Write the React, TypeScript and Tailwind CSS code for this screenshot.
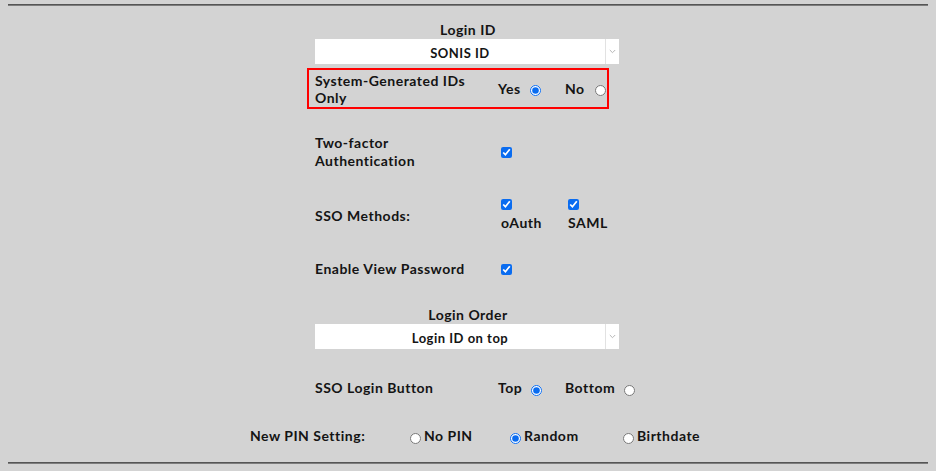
import React from "react";

function FakeSelect({ value }: { value: string }) {
  return (
    <div className="flex h-[25px] w-[304px] bg-white">
      <div className="flex flex-1 items-center justify-center pt-[3px] text-[13px] leading-[22px]">{value}</div>
      <div className="flex w-[14px] items-center justify-center border-l border-[#e2e2e2]">
        <svg width="7" height="5" viewBox="0 0 7 5">
          <path d="M0.8 1 L3.5 3.7 L6.2 1" stroke="#b5b5b5" strokeWidth="1" fill="none" />
        </svg>
      </div>
    </div>
  );
}

function Radio({ checked }: { checked?: boolean }) {
  return (
    <input
      type="radio"
      readOnly
      checked={!!checked}
      className="m-0 h-[11px] w-[11px] accent-[#0a6cf0]"
    />
  );
}

function Check() {
  return <input type="checkbox" readOnly checked className="m-0 h-[11px] w-[11px] accent-[#0a6cf0]" />;
}

export default function App() {
  return (
    <div className="h-[471px] w-[936px] overflow-hidden bg-[#d3d3d3] pt-[4px] font-['Lato','Noto_Sans',sans-serif] text-[14px] font-bold tracking-[0.5px] text-[#141414]">
      <div className="mx-2 h-[2px] border-t border-b border-t-[#555555] border-b-[#7d7d7d]" />
      <div className="mx-auto w-[306px]">
        <div className="mt-[15px] h-[18px] text-center leading-[18px]">Login ID</div>
        <FakeSelect value="SONIS ID" />
        <div className="-ml-[8px] mt-[4px] flex h-[41px] w-[302px] items-center border-2 border-[#ff0000] pl-[6px]">
          <div className="w-[182px] shrink-0 leading-[17px]">
            System-Generated IDs
            <br />
            Only
          </div>
          <div className="flex w-[67px] shrink-0 items-center pl-[1px]">
            <span className="leading-[17px]">Yes</span>
            <span className="ml-[9px] mt-[4px] flex">
              <Radio checked />
            </span>
          </div>
          <div className="flex shrink-0 items-center pl-[1px]">
            <span className="leading-[17px]">No</span>
            <span className="ml-[10px] mt-[4px] flex">
              <Radio />
            </span>
          </div>
        </div>

        <div className="mt-[25px] flex h-[36px] items-center">
          <div className="w-[182px] shrink-0 leading-[18px]">
            Two-factor
            <br />
            Authentication
          </div>
          <span className="ml-[4px] flex">
            <Check />
          </span>
        </div>

        <div className="mt-[29px] flex h-[33px] items-center">
          <div className="w-[182px] shrink-0 leading-[18px]">SSO Methods:</div>
          <div className="flex w-[67px] shrink-0 flex-col items-start">
            <span className="ml-[4px] flex">
              <Check />
            </span>
            <span className="mt-[4px] pl-[4px] leading-[18px]">oAuth</span>
          </div>
          <div className="flex shrink-0 flex-col items-start">
            <span className="ml-[4px] flex">
              <Check />
            </span>
            <span className="mt-[4px] pl-[4px] leading-[18px]">SAML</span>
          </div>
        </div>

        <div className="mt-[28px] flex h-[18px] items-center">
          <div className="w-[182px] shrink-0 leading-[18px]">Enable View Password</div>
          <span className="ml-[4px] flex">
            <Check />
          </span>
        </div>

        <div className="mt-[28px] h-[18px] text-center leading-[18px]">Login Order</div>
        <FakeSelect value="Login ID on top" />

        <div className="mt-[30px] flex h-[18px] items-center">
          <div className="w-[182px] shrink-0 leading-[18px]">SSO Login Button</div>
          <div className="flex w-[67px] shrink-0 items-center pl-[1px]">
            <span className="leading-[18px]">Top</span>
            <span className="ml-[9px] mt-[4px] flex">
              <Radio checked />
            </span>
          </div>
          <div className="flex shrink-0 items-center pl-[1px]">
            <span className="leading-[18px]">Bottom</span>
            <span className="ml-[9px] mt-[4px] flex">
              <Radio />
            </span>
          </div>
        </div>
      </div>

      <div className="mt-[30px] flex h-[18px] items-center pl-[250px]">
        <div className="w-[160px] shrink-0 leading-[18px]">New PIN Setting:</div>
        <div className="flex w-[100px] shrink-0 items-center">
          <span className="mt-[5px] flex">
            <Radio />
          </span>
          <span className="ml-[3px] leading-[18px]">No PIN</span>
        </div>
        <div className="flex w-[113px] shrink-0 items-center">
          <span className="mt-[5px] flex">
            <Radio checked />
          </span>
          <span className="ml-[3px] leading-[18px]">Random</span>
        </div>
        <div className="flex shrink-0 items-center">
          <span className="mt-[5px] flex">
            <Radio />
          </span>
          <span className="ml-[3px] leading-[18px]">Birthdate</span>
        </div>
      </div>

      <div className="mx-2 mt-[17px] h-[2px] border-t border-b border-t-[#555555] border-b-[#7d7d7d]" />
    </div>
  );
}
